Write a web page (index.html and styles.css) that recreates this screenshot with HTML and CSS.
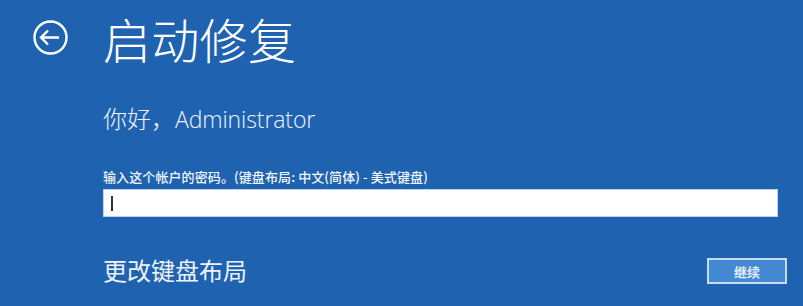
FILE: index.html
```html
<!DOCTYPE html>
<html lang="zh-CN">
<head>
<meta charset="utf-8">
<title>启动修复</title>
<link rel="stylesheet" href="styles.css">
</head>
<body>
<div class="page">
  <header class="header">
    <svg class="back" width="35" height="35" viewBox="0 0 35 35" aria-hidden="true">
      <circle cx="17.5" cy="17.5" r="16" fill="none" stroke="#ffffff" stroke-width="2.4"/>
      <path d="M8 17.5 H26 M15 10.5 L8 17.5 L15 24.5" fill="none" stroke="#ffffff" stroke-width="2.4" stroke-linecap="butt" stroke-linejoin="miter"/>
    </svg>
    <h1 class="title">启动修复</h1>
  </header>
  <main class="content">
    <div class="greeting">你好，<span class="latin">Administrator</span></div>
    <label class="label" for="pw">输入这个帐户的密码。(键盘布局: 中文(简体) - 美式键盘)</label>
    <div class="field"><span class="caret"></span></div>
    <div class="bottom">
      <span class="change">更改键盘布局</span>
      <span class="btn">继续</span>
    </div>
  </main>
</div>
</body>
</html>
```
FILE: styles.css
```css
html, body {
  margin: 0;
  padding: 0;
  background: #1f63b0;
  width: 803px;
  height: 306px;
  overflow: hidden;
}
body {
  font-family: "Noto Sans CJK SC", "Noto Sans", sans-serif;
  color: #ffffff;
}
.page {
  display: flex;
  flex-direction: column;
}
.header {
  display: flex;
  align-items: center;
  padding: 14px 0 0 33px;
  height: 48px;
}
.back {
  display: block;
  flex: none;
  margin-top: -2px;
}
.title {
  margin: 0 0 0 35px;
  font-size: 48px;
  line-height: 48px;
  font-weight: 300;
  letter-spacing: 0.3px;
}
.content {
  display: flex;
  flex-direction: column;
  padding-left: 103px;
  width: 684px;
}
.greeting {
  margin-top: 44px;
  font-size: 24px;
  line-height: 24px;
  font-weight: 300;
  color: #eef3fa;
}
.latin {
  font-family: "Open Sans", "Noto Sans", sans-serif;
  font-size: 23px;
  font-weight: 300;
  letter-spacing: -0.1px;
}
.label {
  margin-top: 38px;
  font-size: 13px;
  line-height: 16px;
  font-weight: 500;
  letter-spacing: 0.1px;
  color: #f4f7fb;
}
.field {
  margin-top: 4px;
  width: 675px;
  height: 28px;
  box-sizing: border-box;
  background: #ffffff;
  border: 1px solid #b9d3ef;
  display: flex;
  align-items: center;
  padding-left: 7px;
}
.caret {
  display: block;
  width: 2px;
  height: 15px;
  background: #333333;
}
.bottom {
  margin-top: 41px;
  display: flex;
  justify-content: space-between;
  align-items: flex-start;
}
.change {
  font-size: 24px;
  line-height: 24px;
  color: #eef3fa;
}
.btn {
  width: 80px;
  height: 26px;
  box-sizing: border-box;
  border: 2px solid #c7dcf2;
  background: #4389d2;
  display: flex;
  align-items: center;
  justify-content: center;
  font-size: 13px;
  font-weight: 700;
  color: #e4eefa;
}
```
